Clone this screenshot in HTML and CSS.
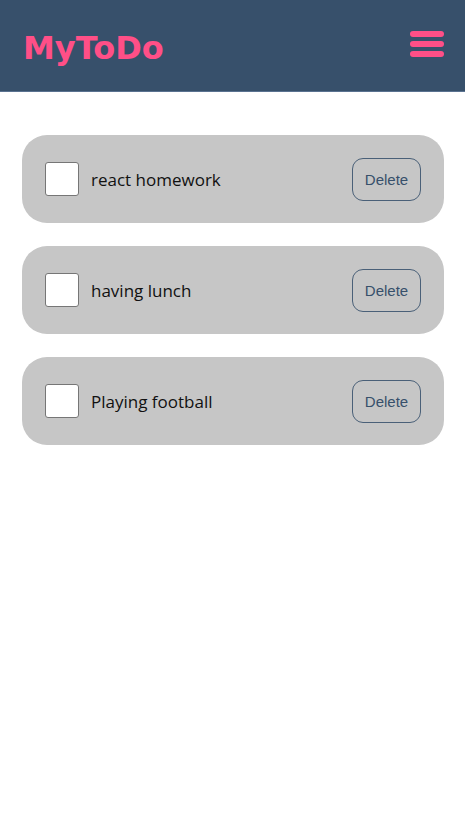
FILE: index.html
```html
<!DOCTYPE html>
<html>
<head>
<meta charset="utf-8">
<link rel="stylesheet" href="styles.css">
</head>
<body>
<header class="header">
  <h1 class="logo">MyToDo</h1>
  <button class="menu" aria-label="menu">
    <span class="bar"></span><span class="bar"></span><span class="bar"></span>
  </button>
</header>
<main class="list">
  <div class="card">
    <label class="item"><input type="checkbox" class="check"><span class="label">react homework</span></label>
    <button class="delete">Delete</button>
  </div>
  <div class="card">
    <label class="item"><input type="checkbox" class="check"><span class="label">having lunch</span></label>
    <button class="delete">Delete</button>
  </div>
  <div class="card">
    <label class="item"><input type="checkbox" class="check"><span class="label">Playing football</span></label>
    <button class="delete">Delete</button>
  </div>
</main>
</body>
</html>
```
FILE: styles.css
```css
* { box-sizing: border-box; }
body {
  margin: 0;
  background: #fff;
  font-family: "Liberation Sans", Arial, sans-serif;
}
.header {
  height: 92px;
  background: #37506b;
  border-bottom: 1px solid #5a7290;
  display: flex;
  align-items: center;
  justify-content: space-between;
  padding: 0 21px 0 23px;
}
.logo {
  margin: 0;
  color: #ff4f87;
  font-family: "DejaVu Sans", Verdana, sans-serif;
  font-weight: bold;
  font-size: 32px;
  letter-spacing: 0;
  padding-top: 4px;
}
.menu {
  background: none;
  border: 0;
  padding: 0;
  width: 34px;
  display: flex;
  flex-direction: column;
  gap: 4px;
  margin-top: -4px;
}
.bar {
  display: block;
  height: 6px;
  border-radius: 3px;
  background: #ff4f87;
}
.list {
  padding: 43px 21px 0 22px;
  display: flex;
  flex-direction: column;
  gap: 23px;
}
.card {
  height: 88px;
  background: #c6c6c6;
  border-radius: 25px;
  display: flex;
  align-items: center;
  justify-content: space-between;
  padding: 0 23px 0 23px;
}
.item {
  display: flex;
  align-items: center;
  gap: 12px;
}
.check {
  appearance: none;
  -webkit-appearance: none;
  margin: 0;
  width: 34px;
  height: 34px;
  background: #fff;
  border: 1px solid #767676;
  border-radius: 3px;
}
.label {
  font-family: "Open Sans", "Noto Sans", sans-serif;
  font-size: 17px;
  color: #111;
}
.delete {
  width: 69px;
  height: 43px;
  background: transparent;
  border: 1px solid #4a6078;
  border-radius: 11px;
  color: #37506b;
  font-family: "Liberation Sans", Arial, sans-serif;
  font-size: 15px;
  padding: 0;
}
```
